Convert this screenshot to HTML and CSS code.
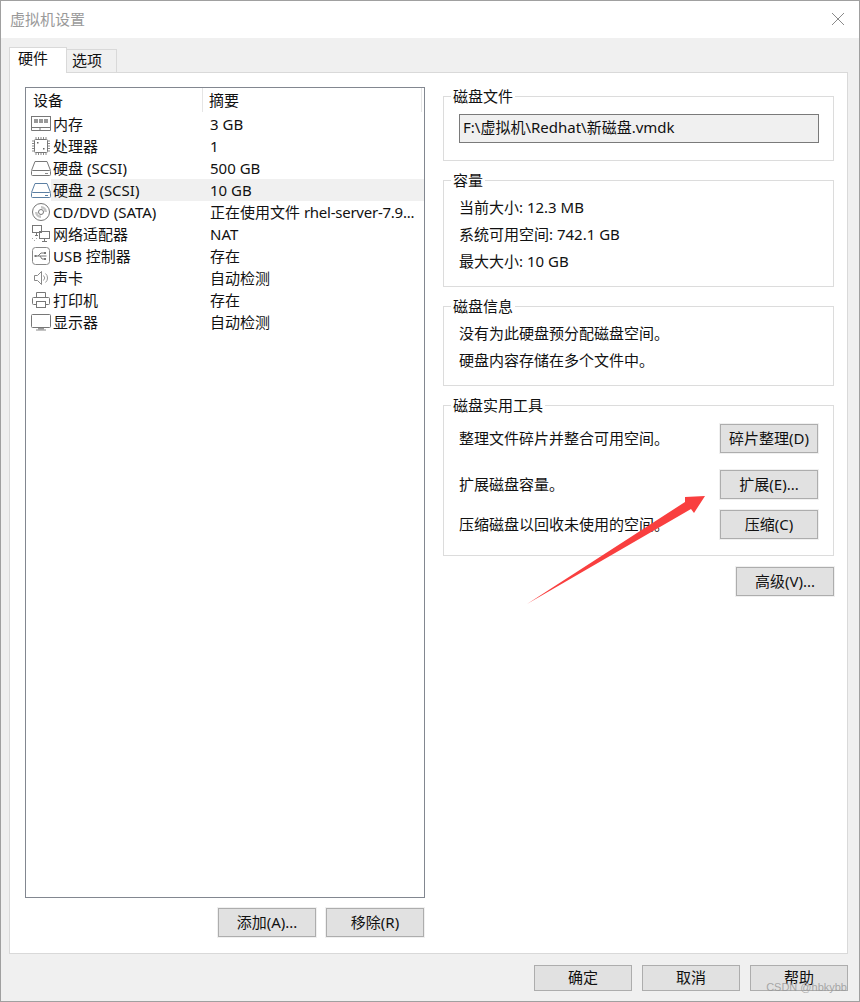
FILE: index.html
```html
<!DOCTYPE html>
<html lang="zh">
<head>
<meta charset="utf-8">
<title>虚拟机设置</title>
<link rel="stylesheet" href="styles.css">
</head>
<body>
<div class="window">
  <header class="titlebar">
    <span class="title">虚拟机设置</span>
    <svg class="close" width="14" height="14" viewBox="0 0 14 14"><path d="M1 1L13 13M13 1L1 13" stroke="#8a8a8a" stroke-width="1" fill="none"/></svg>
  </header>
  <nav class="tabs">
    <span class="tab active">硬件</span>
    <span class="tab">选项</span>
  </nav>
  <main class="panel">
    <section class="left">
      <div class="list">
        <div class="list-head">
          <span class="head-dev">设备</span>
          <span class="head-sum">摘要</span>
        </div>
        <div class="row">
          <svg class="ico" viewBox="0 0 20 20"><g fill="none" stroke="#777"><rect x="0.500" y="2.500" width="19" height="11"/><path d="M0.500 13.500v3h19v-3M9 13.500v3"/></g><path d="M3 5h4v4H3zM8 5h4v4H8zM13 5h4v4h-4z" fill="#999"/></svg>
          <div class="cells"><span class="c1">内存</span><span class="c2">3 GB</span></div>
        </div>
        <div class="row">
          <svg class="ico" viewBox="0 0 20 20"><rect x="3.500" y="3.500" width="13" height="13" rx="1" fill="none" stroke="#777"/><path d="M5 1v2M7.500 1v2M10 1v2M12.500 1v2M15 1v2M5 17v2M7.500 17v2M10 17v2M12.500 17v2M15 17v2M1 5h2M1 7.500h2M1 10h2M1 12.500h2M1 15h2M17 5h2M17 7.500h2M17 10h2M17 12.500h2M17 15h2" stroke="#888" fill="none"/><path d="M6 6h1.500v1.500H6zM12 12h1.500v1.500H12z" fill="#666"/></svg>
          <div class="cells"><span class="c1">处理器</span><span class="c2">1</span></div>
        </div>
        <div class="row">
          <svg class="ico" viewBox="0 0 20 20"><g fill="none" stroke="#777"><path d="M0.500 12.500L4 3.500h12l3.500 9"/><path d="M1.500 12.500h17a1 1 0 0 1 1 1v3a1 1 0 0 1-1 1h-17a1 1 0 0 1-1-1v-3a1 1 0 0 1 1-1z"/></g><path d="M14 15h3v1h-3z" fill="#888"/></svg>
          <div class="cells"><span class="c1">硬盘 (SCSI)</span><span class="c2">500 GB</span></div>
        </div>
        <div class="row selected">
          <svg class="ico" viewBox="0 0 20 20"><g fill="none" stroke="#5b7fa3"><path d="M0.500 12.500L4 3.500h12l3.500 9"/><path d="M1.500 12.500h17a1 1 0 0 1 1 1v3a1 1 0 0 1-1 1h-17a1 1 0 0 1-1-1v-3a1 1 0 0 1 1-1z"/></g><path d="M14 15h3v1h-3z" fill="#5b7fa3"/></svg>
          <div class="cells"><span class="c1">硬盘 2 (SCSI)</span><span class="c2">10 GB</span></div>
        </div>
        <div class="row">
          <svg class="ico" viewBox="0 0 20 20"><g fill="none" stroke="#777"><circle cx="10" cy="10" r="8.500"/><circle cx="10" cy="10" r="2.500"/></g><path d="M10 4a6 6 0 0 1 6 6h-2.500A3.500 3.500 0 0 0 10 6.500z" fill="#c4c4c4"/><path d="M10 16a6 6 0 0 1-6-6h2.500A3.500 3.500 0 0 0 10 13.500z" fill="#c4c4c4"/></svg>
          <div class="cells"><span class="c1">CD/DVD (SATA)</span><span class="c2">正在使用文件 <span class="iso">rhel-server-7.9...</span></span></div>
        </div>
        <div class="row">
          <svg class="ico" viewBox="0 0 20 20"><g fill="none" stroke="#777"><rect x="1.500" y="1.500" width="9" height="7"/><rect x="8.500" y="7.500" width="10" height="7"/><path d="M4 11.500h3M5.500 8.500v3M11 17.500h5M13.500 14.500v3"/></g><path d="M1 14h1v1H1zM3 16h1v1H3zM5 14h1v1H5z" fill="#aaa"/></svg>
          <div class="cells"><span class="c1">网络适配器</span><span class="c2">NAT</span></div>
        </div>
        <div class="row">
          <svg class="ico" viewBox="0 0 20 20"><rect x="1.500" y="1.500" width="17" height="17" rx="3" fill="none" stroke="#888"/><path d="M4.500 10h11M7 10l3-3h3M9 10l2 3h2" fill="none" stroke="#777"/><path d="M3.500 9h2v2h-2zM13 6h2v2h-2zM13 12h2v2h-2z" fill="#777"/></svg>
          <div class="cells"><span class="c1">USB 控制器</span><span class="c2">存在</span></div>
        </div>
        <div class="row">
          <svg class="ico" viewBox="0 0 20 20"><path d="M3.500 7.500h3l4-4v13l-4-4h-3z" fill="none" stroke="#888"/><path d="M12.500 7.500a3.500 3.500 0 0 1 0 5M14.500 5.500a6 6 0 0 1 0 9" fill="none" stroke="#999"/></svg>
          <div class="cells"><span class="c1">声卡</span><span class="c2">自动检测</span></div>
        </div>
        <div class="row">
          <svg class="ico" viewBox="0 0 20 20"><g fill="none" stroke="#777"><path d="M5.500 7V2.500h9V7"/><rect x="1.500" y="7.500" width="17" height="7" rx="1"/><rect x="5.500" y="11.500" width="9" height="6" fill="#fff"/></g></svg>
          <div class="cells"><span class="c1">打印机</span><span class="c2">存在</span></div>
        </div>
        <div class="row">
          <svg class="ico" viewBox="0 0 20 20"><g fill="none" stroke="#777"><rect x="0.500" y="2.500" width="19" height="13" rx="1"/></g><path d="M7 16h6v1.500H7z" fill="#999"/><path d="M5 17.500h10v1H5z" fill="#888"/></svg>
          <div class="cells"><span class="c1">显示器</span><span class="c2">自动检测</span></div>
        </div>
      </div>
      <div class="left-actions">
        <button class="btn">添加(A)...</button>
        <button class="btn">移除(R)</button>
      </div>
    </section>
    <section class="right">
      <fieldset class="group group-file">
        <legend>磁盘文件</legend>
        <div class="path">F:\虚拟机\Redhat\新磁盘.vmdk</div>
      </fieldset>
      <fieldset class="group group-text">
        <legend>容量</legend>
        <p>当前大小: 12.3 MB</p>
        <p>系统可用空间: 742.1 GB</p>
        <p>最大大小: 10 GB</p>
      </fieldset>
      <fieldset class="group group-text">
        <legend>磁盘信息</legend>
        <p>没有为此硬盘预分配磁盘空间。</p>
        <p>硬盘内容存储在多个文件中。</p>
      </fieldset>
      <fieldset class="group group-tools">
        <legend>磁盘实用工具</legend>
        <div class="tool tool-defrag"><span>整理文件碎片并整合可用空间。</span><button class="btn">碎片整理(D)</button></div>
        <div class="tool tool-expand"><span>扩展磁盘容量。</span><button class="btn">扩展(E)...</button></div>
        <div class="tool tool-compact"><span>压缩磁盘以回收未使用的空间。</span><button class="btn">压缩(C)</button></div>
      </fieldset>
      <div class="advanced"><button class="btn">高级(V)...</button></div>
    </section>
  </main>
  <footer class="footer">
    <button class="btn btn-foot">确定</button>
    <button class="btn btn-foot">取消</button>
    <button class="btn btn-foot">帮助</button>
  </footer>
  <svg class="arrow" width="860" height="1002" viewBox="0 0 860 1002"><path d="M527 604L685 502L685 497L705 496L694 513L691 509Z" fill="#f93f3f"/></svg>
  <span class="watermark">CSDN @hbkybb</span>
</div>
</body>
</html>
```
FILE: styles.css
```css
* { box-sizing: border-box; }
html, body { margin: 0; padding: 0; }
body {
  font-family: "Noto Sans", "Noto Sans CJK SC", sans-serif;
  font-size: 15px;
  line-height: 20px;
  color: #111;
  background: #f0f0f0;
}
.window {
  position: relative;
  width: 860px;
  height: 1002px;
  display: flex;
  flex-direction: column;
  background: #f0f0f0;
  border: 1px solid #a0a0a0;
}
.titlebar {
  height: 37px;
  flex: none;
  background: #fff;
  display: flex;
  align-items: center;
  justify-content: space-between;
  padding: 0 14px 2px 9px;
}
.title { color: #9a9a9a; font-size: 15px; }
.close { display: block; }
.tabs {
  height: 35px;
  flex: none;
  display: flex;
  align-items: flex-end;
  padding-left: 8px;
  position: relative;
  z-index: 1;
  margin-bottom: -1px;
}
.tab {
  width: 50px;
  height: 23px;
  margin-bottom: 1px;
  padding-left: 5px;
  line-height: 20px;
  background: #f0f0f0;
  border: 1px solid #d9d9d9;
  border-left: 0;
  border-bottom: 0;
}
.tab.active {
  width: 58px;
  height: 26px;
  margin-bottom: 0;
  padding-left: 8px;
  line-height: 20px;
  background: #fff;
  border-left: 1px solid #d9d9d9;
}
.panel {
  flex: 1;
  min-height: 0;
  margin: 0 11px 0 8px;
  background: #fff;
  border: 1px solid #d9d9d9;
  padding: 13px 13px 16px 15px;
  display: flex;
  gap: 18px;
}
.left {
  width: 400px;
  flex: none;
  display: flex;
  flex-direction: column;
  gap: 10px;
  padding-top: 1px;
}
.list {
  flex: 1;
  border: 1px solid #828790;
  background: #fff;
}
.list-head {
  height: 25px;
  display: flex;
  align-items: flex-start;
}
.head-dev {
  width: 177px;
  height: 24px;
  padding-left: 7px;
  line-height: 24px;
  border-right: 1px solid #e5e5e5;
}
.head-sum {
  flex: 1;
  height: 24px;
  padding-left: 6px;
  line-height: 24px;
  margin-right: 2px;
  border-right: 1px solid #e5e5e5;
}
.row {
  height: 22px;
  display: flex;
  align-items: center;
  padding-left: 5px;
}
.ico { width: 20px; height: 20px; flex: none; display: block; }
.cells {
  flex: 1;
  height: 22px;
  display: flex;
  align-items: center;
  padding-left: 2px;
  line-height: 22px;
}
.row.selected .cells { background: #f0f0f0; }
.c1 { width: 157px; flex: none; }
.c2 { white-space: nowrap; }
.iso { letter-spacing: -0.25px; }
.left-actions {
  display: flex;
  justify-content: flex-end;
  gap: 10px;
  padding-right: 1px;
}
.btn {
  width: 98px;
  height: 29px;
  padding: 0 0 2px;
  font: inherit;
  color: #111;
  background: #e1e1e1;
  border: 1px solid #adadad;
  box-shadow: 0 0 0 1px #f0f0f0;
  border-radius: 0;
}
.right {
  flex: 1;
  min-width: 0;
  display: flex;
  flex-direction: column;
}
.group {
  margin: 0 0 9px;
  padding: 0 15px 0 15px;
  border: 1px solid #dcdcdc;
  min-width: 0;
}
legend {
  padding: 0 2px;
  margin-left: -8px;
  line-height: 20px;
}
.group-file { padding-top: 8px; padding-bottom: 17px; }
.path {
  height: 29px;
  margin-right: -1px;
  background: #f0f0f0;
  border: 1px solid #7a7a7a;
  padding-left: 3px;
  line-height: 25px;
}
.group-text { padding-top: 7px; padding-bottom: 15px; }
.group-text p { margin: 0 0 7px; }
.group-text p:last-child { margin-bottom: 0; }
.group-tools { padding-top: 9px; padding-bottom: 16px; margin-bottom: 11px; }
.tool {
  display: flex;
  justify-content: space-between;
  align-items: center;
}
.tool span { padding-bottom: 2px; }
.tool-expand { margin-top: 17px; }
.tool-compact { margin-top: 11px; }
.advanced { display: flex; justify-content: flex-end; }
.footer {
  flex: none;
  height: 47px;
  display: flex;
  justify-content: flex-end;
  gap: 10px;
  padding: 11px 11px 0 0;
}
.btn-foot { height: 26px; box-shadow: none; }
.arrow {
  position: absolute;
  left: -1px;
  top: -1px;
  pointer-events: none;
}
.watermark {
  position: absolute;
  right: 12px;
  bottom: 7px;
  font-family: "Liberation Sans", sans-serif;
  font-size: 11px;
  line-height: 14px;
  color: rgba(150, 150, 150, 0.8);
}
```
